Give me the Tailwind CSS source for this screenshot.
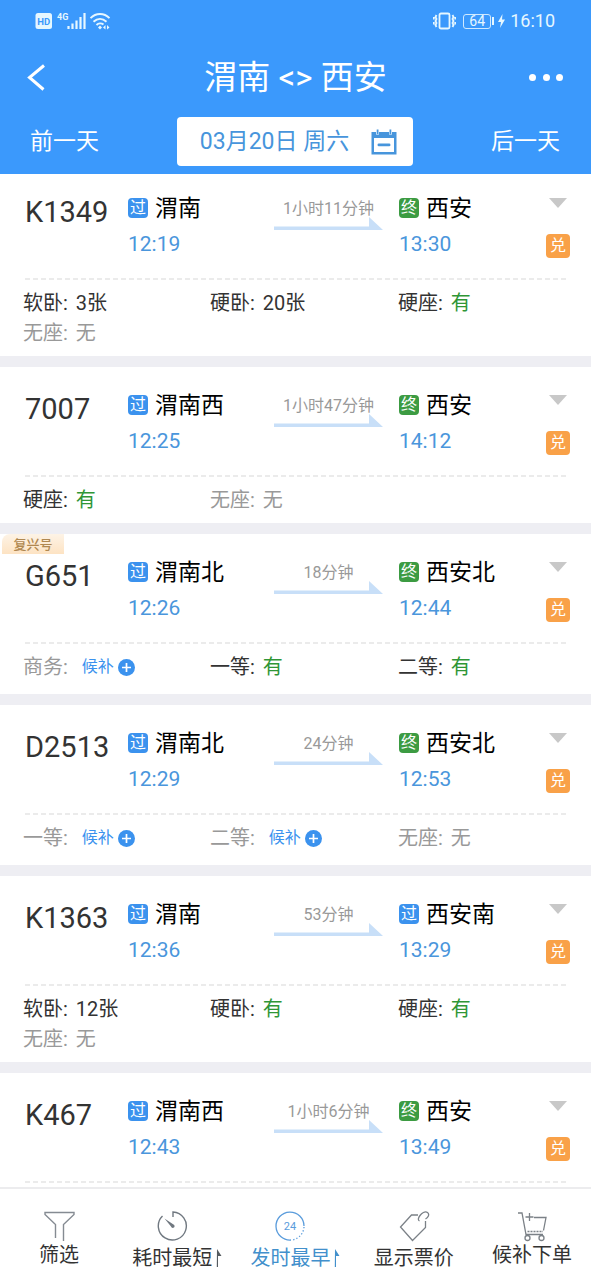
<!DOCTYPE html>
<html lang="zh-CN">
<head>
<meta charset="utf-8">
<meta name="viewport" content="width=device-width, initial-scale=1">
<title>渭南 - 西安</title>
<script src="https://cdn.jsdelivr.net/npm/@tailwindcss/browser@4"></script>
</head>
<body class="flex h-screen flex-col overflow-hidden bg-[#eeeef3] font-[Roboto,'Noto_Sans_CJK_SC',sans-serif] text-[#333]">

<header class="relative z-10 shrink-0 bg-[#3b99fc] pb-2 text-white">
  <div class="flex h-[42px] items-center justify-between pl-[35px] pr-9">
    <div class="flex items-center">
      <svg class="h-[18px] w-[76px]" viewBox="0 0 76 18" fill="none" stroke="#e6f7ff" aria-label="HD 4G">
        <rect x="0.5" y="1" width="16.500" height="16" rx="2.500" fill="#e6f7ff" stroke="none"/>
        <text x="8.800" y="12.700" text-anchor="middle" font-size="9.500" font-weight="700" fill="#3b99fc" stroke="none">HD</text>
        <text x="22" y="8" font-size="9" font-weight="700" fill="#e6f7ff" stroke="none">4G</text>
        <path d="M33.500 14v3M37.500 11.500v5.500M41.500 8.500v8.500M45.500 5v12M49.500 1v16" stroke-width="2.200"/>
        <path d="M55.500 6.200c5.500-5.600 13.500-5.600 19 0M58.500 9.800c4-3.800 9-3.800 13 0M61.500 13c2-2 5-2 7-.5" stroke-width="1.900"/>
        <path d="M63 15.500l2-2 2 2-2 2zM68 15.500l2.500-2.500v4.500zM74.500 15.500L72 13v4.500z" fill="#e6f7ff" stroke="none"/>
      </svg>
    </div>
    <div class="flex items-center text-[#e6f7ff]">
      <svg class="h-[18px] w-[23px]" viewBox="0 0 23 18" fill="none" stroke="currentColor" stroke-width="1.800">
        <rect x="6.500" y="1.500" width="10" height="15" rx="1.500"/>
        <path d="M3.500 3l-1 2 1 2-1 2 1 2-1 2 1 2M19.500 3l1 2-1 2 1 2-1 2 1 2-1 2M.8 5v2.500M.8 10v2.500M22.200 5v2.500M22.200 10v2.500"/>
      </svg>
      <span class="ml-[7px] flex h-[15px] w-7 items-center justify-center rounded-[3px] border border-[#cfe9ff] text-sm leading-none">64</span>
      <span class="ml-px h-2 w-0.5 bg-[#e6f7ff]"></span>
      <svg class="ml-1 h-[14px] w-[7px]" viewBox="0 0 7 14"><path d="M4.500 0L0 8h3L2 14l5-8.500H4z" fill="currentColor"/></svg>
      <span class="ml-[5px] text-lg leading-none">16:10</span>
    </div>
  </div>

  <div class="flex h-[70px] items-center justify-between px-[27px]">
    <button type="button" aria-label="返回" class="w-9">
      <svg class="h-[27px] w-[19px]" viewBox="0 0 19 27" fill="none" stroke="#fff" stroke-width="3"><path d="M17 1.500L2.500 13.500L16.500 25.500"/></svg>
    </button>
    <h1 class="text-[33px] leading-none">渭南 &lt;&gt; 西安</h1>
    <button type="button" aria-label="更多" class="flex w-9 justify-between">
      <i class="mx-px size-[7px] rounded-full bg-white"></i><i class="mx-px size-[7px] rounded-full bg-white"></i><i class="mx-px size-[7px] rounded-full bg-white"></i>
    </button>
  </div>

  <div class="mt-[5px] flex h-[49px] items-center justify-between pl-[30px] pr-[31px]">
    <button type="button" class="text-[23px] leading-none">前一天</button>
    <button type="button" class="flex h-[49px] items-center rounded-[4px] bg-white pl-[23px] pr-4 text-[23px] leading-none text-[#4795dc]">03月20日 周六
      <svg class="ml-[22px] h-[26px] w-[26px]" viewBox="0 0 26 26" fill="#4795dc">
        <path fill-rule="evenodd" d="M.5 3H5v2.500h3V3h10v2.500h3V3h4.500v22.500H.5zM3 9v14h20V9z"/>
        <rect x="5.700" y="0.500" width="1.800" height="4.500"/><rect x="18.500" y="0.500" width="1.800" height="4.500"/>
        <rect x="6.500" y="14.500" width="13" height="2.800" rx="1.400"/>
      </svg>
    </button>
    <button type="button" class="text-[23px] leading-none">后一天</button>
  </div>
</header>

<main id="trains" class="-mt-1 flex min-h-0 flex-1 flex-col gap-[11px] overflow-hidden"></main>

<nav class="grid h-[93px] shrink-0 grid-cols-5 border-t-2 border-[#ececee] bg-white text-xl leading-none text-[#333]">
  <button type="button" class="flex flex-col items-center pt-[21px]">
    <svg class="h-[32px] w-[32px]" viewBox="0 0 32 32" fill="none" stroke="#858b92" stroke-width="1.400"><path d="M12.500 28V14.500L2 4.500V2.500h29v2L20.500 14.500V31"/></svg>
    <span class="pt-[3px]">筛选</span>
  </button>
  <button type="button" class="flex items-start justify-center pt-[21px]">
    <span class="flex flex-col items-center">
      <svg class="h-[32px] w-[32px]" viewBox="0 0 32 32" fill="none" stroke="#707880" stroke-width="1.400"><path d="M17 7V2a14 14 0 1 1-10.500 4"/><path d="M8.500 8.500l6.500 8a1.800 1.800 0 1 0 2.500-2z" fill="#707880" stroke="none"/></svg>
      <span class="pt-1.5">耗时最短</span>
    </span>
    <svg class="ml-1 mt-[39px] h-[18px] w-[6px]" viewBox="0 0 6 18" fill="#555b60"><path d="M1 0l4.500 7H2v11H.8z"/></svg>
  </button>
  <button type="button" class="flex items-start justify-center pt-[21px] text-[#4290cc]">
    <span class="flex flex-col items-center">
      <svg class="h-[32px] w-[32px]" viewBox="0 0 32 32" fill="none" stroke="#5a9cdc" stroke-width="1.300"><path d="M17 30A14 14 0 1 1 30 16"/><path d="M30 17A14 14 0 0 1 18 30" stroke-dasharray="1.300 2"/><text x="16" y="20" text-anchor="middle" font-size="11" fill="#5a9cdc" stroke="none">24</text></svg>
      <span class="pt-1.5">发时最早</span>
    </span>
    <svg class="ml-1 mt-[39px] h-[18px] w-[6px]" viewBox="0 0 6 18" fill="#4290cc"><path d="M1 0l4.500 7H2v11H.8z"/></svg>
  </button>
  <button type="button" class="flex flex-col items-center pt-[21px]">
    <svg class="h-[32px] w-[32px]" viewBox="0 0 32 32" fill="none" stroke="#7b8187" stroke-width="1.300"><path d="M20 5H13.500L2.500 17L14.500 30.500L27.500 17.500V11"/><path d="M21.500 11c-2-1-1-3.500.5-5.500s5-5 7.500-3 .5 5-2 6.500"/></svg>
    <span class="pt-1.5">显示票价</span>
  </button>
  <button type="button" class="flex flex-col items-center pt-[21px]">
    <svg class="h-[32px] w-[32px]" viewBox="0 0 32 32" fill="none" stroke="#7b8187" stroke-width="1.300"><path d="M2 3h4l4 21.500h17M18 7.500h12l-2.500 13"/><path d="M11.500 21.500H27" stroke-dasharray="2 1"/><path d="M13.500 3v8M9.500 7h8"/><circle cx="11.500" cy="28" r="2.500"/><circle cx="25.500" cy="28" r="2.500"/></svg>
    <span class="pt-[3px]">候补下单</span>
  </button>
</nav>

<script>
const trains = [
  { no: 'K1349', from: '渭南', dep: '12:19', dur: '1小时11分钟', to: '西安', arr: '13:30', end: '终', seats: [['软卧', '3张'], ['硬卧', '20张'], ['硬座', '有'], ['无座', '无']] },
  { no: '7007', from: '渭南西', dep: '12:25', dur: '1小时47分钟', to: '西安', arr: '14:12', end: '终', seats: [['硬座', '有'], ['无座', '无']] },
  { no: 'G651', tag: '复兴号', from: '渭南北', dep: '12:26', dur: '18分钟', to: '西安北', arr: '12:44', end: '终', seats: [['商务', '候补'], ['一等', '有'], ['二等', '有']] },
  { no: 'D2513', from: '渭南北', dep: '12:29', dur: '24分钟', to: '西安北', arr: '12:53', end: '终', seats: [['一等', '候补'], ['二等', '候补'], ['无座', '无']] },
  { no: 'K1363', from: '渭南', dep: '12:36', dur: '53分钟', to: '西安南', arr: '13:29', end: '过', seats: [['软卧', '12张'], ['硬卧', '有'], ['硬座', '有'], ['无座', '无']] },
  { no: 'K467', from: '渭南西', dep: '12:43', dur: '1小时6分钟', to: '西安', arr: '13:49', end: '终', seats: [] }
];

const badge = t => `<span class="${t === '终' ? 'bg-[#3c9b42]' : 'bg-[#3b92ee]'} flex size-5 shrink-0 items-center justify-center rounded-[4px] text-base leading-none text-white">${t}</span>`;

const stop = (kind, name, time) => `
  <div>
    <div class="flex h-7 items-center gap-[7px] text-[23px] leading-none whitespace-nowrap text-black">${badge(kind)}${name}</div>
    <time class="mt-2.5 block text-[21px] leading-6 text-[#4a96dc]">${time}</time>
  </div>`;

const seat = ([name, value]) => {
  if (value === '候补') return `<div class="flex h-[30px] items-center text-[#999]">${name}:
    <button type="button" class="ml-[14px] flex items-center gap-1 text-base leading-none text-[#3b92ee]">候补
      <svg class="size-[17px]" viewBox="0 0 17 17"><circle cx="8.500" cy="8.500" r="8.500" fill="#3b92ee"/><path d="M8.500 4v9M4 8.500h9" stroke="#fff" stroke-width="1.700"/></svg>
    </button></div>`;
  const row = value === '无' ? 'text-[#999]' : 'text-[#333]';
  const val = value === '有' ? 'text-[#2f9636]' : '';
  return `<div class="${row} flex h-[30px] items-center">${name}:<span class="${val} ml-2">${value}</span></div>`;
};

document.getElementById('trains').innerHTML = trains.map(t => `
  <article class="relative shrink-0 bg-white pt-6 ${t.seats.some(s => s[1] === '候补') ? 'pb-3' : 'pb-2'}">
    ${t.tag ? `<span class="absolute top-0 left-0.5 flex h-5 w-[62px] items-center justify-center rounded-tl-lg bg-linear-to-b from-[#fdf3e6] to-[#fde3c3] text-[13px] leading-none font-medium text-[#b08850]">${t.tag}</span>` : ''}
    <div class="grid h-[84px] grid-cols-[103fr_146fr_125fr_171fr] pr-[21px] pl-[25px]">
      <h2 class="text-[29px] leading-9">${t.no}</h2>
      ${stop('过', t.from, t.dep)}
      <div class="flex w-[109px] flex-col items-center text-base leading-none whitespace-nowrap text-[#999]">
        <span class="pt-[7px]">${t.dur}</span>
        <svg class="h-[13px] w-[109px]" viewBox="0 0 109 13"><path d="M0 9.500H95V0L109 13H0z" fill="#c8dff8"/></svg>
      </div>
      <div class="flex justify-between">
        ${stop(t.end, t.to, t.arr)}
        <div class="flex flex-col items-center pt-[3px]">
          <button type="button" aria-label="展开" class="h-3"><svg class="h-[10px] w-[18px]" viewBox="0 0 18 10"><path d="M0 0h18L9 10z" fill="#c8c8c8"/></svg></button>
          <span class="mt-[25px] flex size-6 items-center justify-center rounded-[4px] bg-[#f9a148] text-base leading-none text-white">兑</span>
        </div>
      </div>
    </div>
    <svg class="ml-[25px] block h-0.5 w-[calc(100%-50px)]"><line x1="0" y1="1" x2="100%" y2="1" stroke="#ebebeb" stroke-width="2" stroke-dasharray="5 3"/></svg>
    <div class="grid grid-cols-[187fr_188fr_171fr] pt-2 pr-[22px] pl-[23px] text-xl leading-none whitespace-nowrap">${t.seats.map(seat).join('')}</div>
  </article>`).join('');
</script>
</body>
</html>
